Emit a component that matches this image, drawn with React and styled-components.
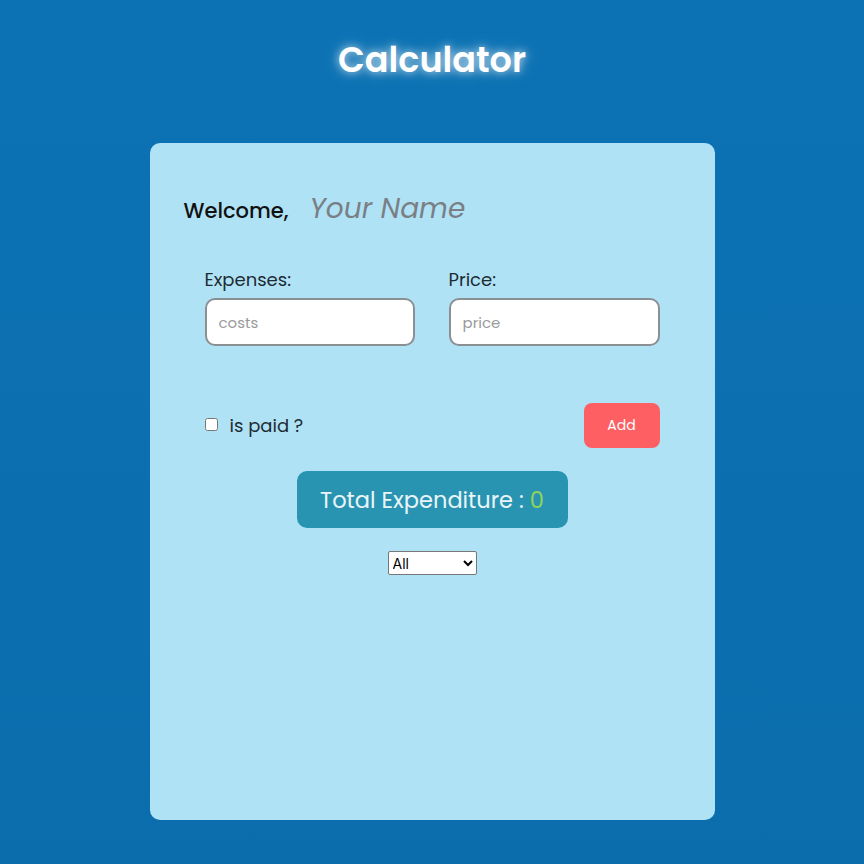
import React from "react";
import styled, { createGlobalStyle } from "styled-components";

const GlobalStyle = createGlobalStyle`
  html, body {
    margin: 0;
    padding: 0;
    background: #0c6fb0;
    font-family: "Poppins", Inter, "Noto Sans", sans-serif;
  }
`;

const Page = styled.div`
  width: 864px;
  height: 864px;
  display: flex;
  flex-direction: column;
  align-items: center;
  background: linear-gradient(180deg, #0c72b4 0%, #0b6dac 100%);
`;

const Title = styled.h1`
  margin: 33px 0 0;
  font-size: 35px;
  line-height: 54px;
  font-weight: 600;
  color: #ffffff;
  text-shadow: 0 0 8px rgba(255, 255, 255, 0.7), 0 0 18px rgba(255, 255, 255, 0.35);
`;

const Card = styled.div`
  box-sizing: border-box;
  width: 565px;
  height: 677px;
  margin-top: 56px;
  background: #b0e2f6;
  border-radius: 10px;
  padding: 45px 55px 0 34px;
  display: flex;
  flex-direction: column;
`;

const Greeting = styled.div`
  display: flex;
  align-items: baseline;
  gap: 21px;
`;

const Welcome = styled.span`
  font-size: 21px;
  font-weight: 500;
  color: #111;
`;

const NameInput = styled.input`
  border: none;
  background: transparent;
  outline: none;
  padding: 0;
  width: 250px;
  font-family: inherit;
  font-size: 28px;
  font-style: italic;
  color: #222;
  &::placeholder {
    color: #7a7f85;
  }
`;

const Fields = styled.div`
  display: grid;
  grid-template-columns: 210px 211px;
  column-gap: 34px;
  margin: 36px 0 0 21px;
`;

const Field = styled.label`
  display: flex;
  flex-direction: column;
  gap: 5px;
  font-size: 18px;
  color: #1e2b33;
`;

const TextInput = styled.input`
  box-sizing: border-box;
  height: 48px;
  width: 100%;
  border: 2px solid #8a8f93;
  border-radius: 10px;
  background: #fff;
  padding: 0 12px;
  font-family: inherit;
  font-size: 15px;
  &::placeholder {
    color: #9a9a9a;
  }
`;

const ActionRow = styled.div`
  display: flex;
  align-items: center;
  justify-content: space-between;
  margin: 57px 0 0 21px;
`;

const PaidLabel = styled.label`
  display: flex;
  align-items: center;
  gap: 12px;
  font-size: 18px;
  color: #1e2b33;
  input {
    margin: 0 0 2px;
    width: 13px;
    height: 13px;
  }
`;

const AddButton = styled.button`
  width: 76px;
  height: 45px;
  border: none;
  border-radius: 8px;
  background: #fd5f63;
  color: #fff;
  font-family: inherit;
  font-size: 14px;
`;

const Summary = styled.div`
  display: flex;
  flex-direction: column;
  align-items: center;
  gap: 23px;
  margin: 23px 0 0 21px;
`;

const TotalBox = styled.div`
  box-sizing: border-box;
  width: 271px;
  height: 57px;
  display: flex;
  align-items: center;
  justify-content: center;
  background: #2994b2;
  border-radius: 10px;
  font-size: 22.5px;
  color: #e9f4f8;
`;

const Amount = styled.span`
  color: #8fd45a;
  margin-left: 6px;
`;

const Filter = styled.select`
  width: 89px;
  height: 24px;
  font-family: Inter, sans-serif;
  font-size: 14px;
  border: 1px solid #777;
  border-radius: 2px;
  background: #fff;
`;

export default function App() {
  return (
    <>
      <GlobalStyle />
      <Page>
        <Title>Calculator</Title>
        <Card>
          <Greeting>
            <Welcome>Welcome,</Welcome>
            <NameInput placeholder="Your Name" />
          </Greeting>
          <Fields>
            <Field>
              Expenses:
              <TextInput placeholder="costs" />
            </Field>
            <Field>
              Price:
              <TextInput placeholder="price" />
            </Field>
          </Fields>
          <ActionRow>
            <PaidLabel>
              <input type="checkbox" />
              is paid ?
            </PaidLabel>
            <AddButton>Add</AddButton>
          </ActionRow>
          <Summary>
            <TotalBox>
              Total Expenditure :<Amount>0</Amount>
            </TotalBox>
            <Filter defaultValue="all">
              <option value="all">All</option>
              <option value="paid">Paid</option>
              <option value="unpaid">Unpaid</option>
            </Filter>
          </Summary>
        </Card>
      </Page>
    </>
  );
}
